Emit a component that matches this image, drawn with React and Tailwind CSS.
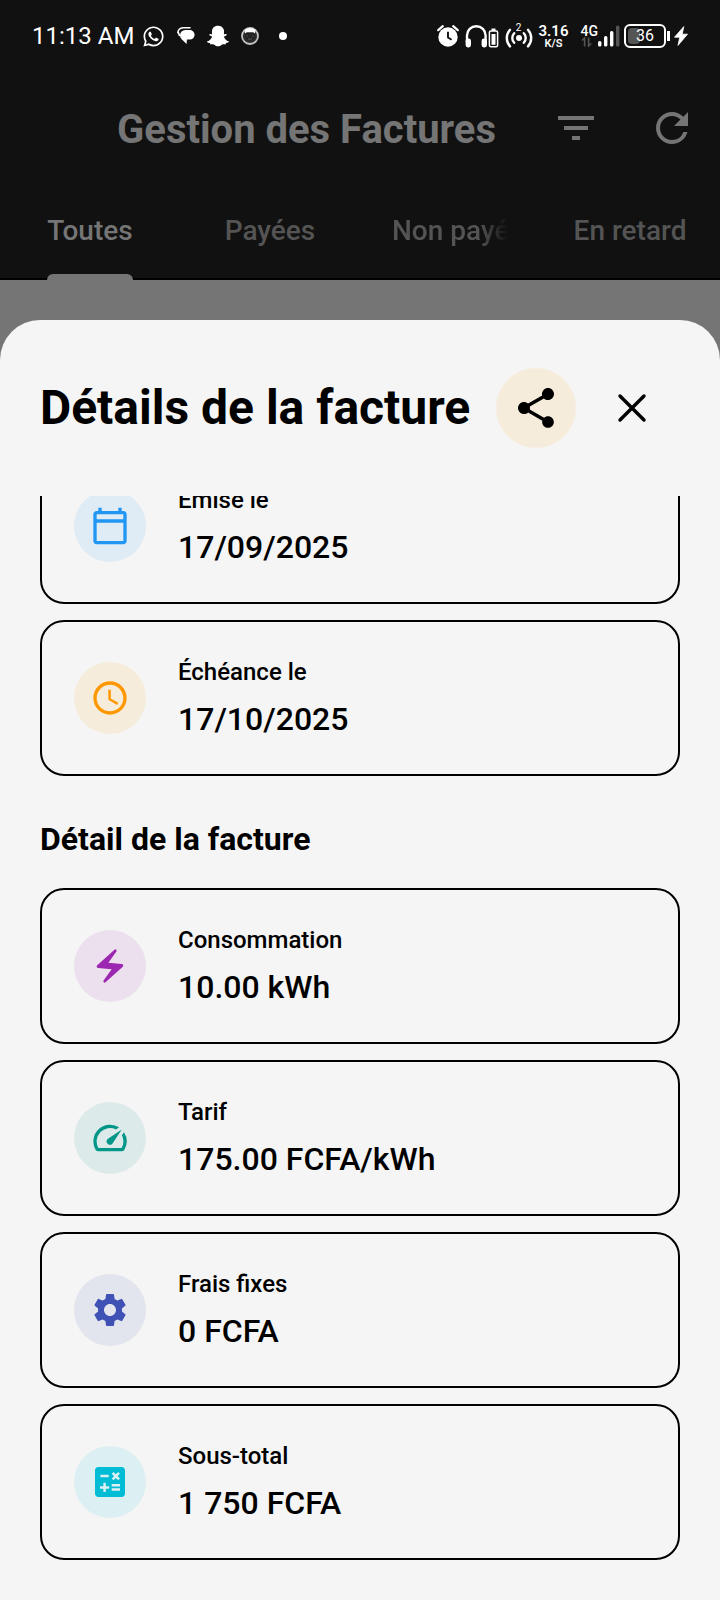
import { useLayoutEffect, useRef } from "react";
import { FaSnapchatGhost, FaWhatsapp } from "react-icons/fa";
import {
  MdAccessTime,
  MdCalculate,
  MdElectricBolt,
  MdFilterList,
  MdRefresh,
  MdSettings,
  MdShare,
  MdSpeed,
} from "react-icons/md";

function CalendarIcon({ className }) {
  return (
    <svg viewBox="0 0 24 24" fill="currentColor" className={className} aria-hidden="true">
      <path d="M20 3h-1V1h-2v2H7V1H5v2H4c-1.1 0-2 .9-2 2v16c0 1.1.9 2 2 2h16c1.1 0 2-.9 2-2V5c0-1.1-.9-2-2-2zm0 18H4V10h16v11zm0-13H4V5h16v3z" />
    </svg>
  );
}

function CloseIcon({ className }) {
  return (
    <svg
      viewBox="0 0 24 24"
      fill="none"
      stroke="currentColor"
      strokeWidth="1.7"
      strokeLinecap="round"
      className={className}
      aria-hidden="true"
    >
      <path d="M6 6l12 12M18 6 6 18" />
    </svg>
  );
}

function ChatIcon() {
  return (
    <svg viewBox="0 0 18 18" className="h-[18px] w-[18px]" aria-hidden="true">
      <path
        d="M8.2 3h4.6a4.8 4.8 0 0 1 0 9.6H9.9L9.6 17 4.4 12A5 5 0 0 1 3 8.2 5.2 5.2 0 0 1 8.200 3z"
        fill="#fff"
      />
      <path d="M.8 6.2C1 3 3 1 6 .8h7.6" fill="none" stroke="#fff" strokeWidth="1.4" />
      <path d="M1 4.6 2.6 9" fill="none" stroke="#fff" strokeWidth="1.6" />
    </svg>
  );
}

function FaceIcon() {
  return (
    <svg viewBox="0 0 18 18" className="h-[18px] w-[18px]" aria-hidden="true">
      <circle cx="9" cy="9" r="8" fill="#2b2b2b" stroke="#c4c4c4" strokeWidth="1.8" />
      <path d="M3.5 3Q9-1 14.5 3L14 6.5l-1.5-1h-7L4 6.5z" fill="#fff" />
      <path d="M4.5 6.5 6 5.5h6l1.5 1 .4 4-2.4 2.7h-5l-2.400-2.700z" fill="#222" />
      <path d="M5.500 9h1.600M10.900 9h1.600M7 12h4" stroke="#555" strokeWidth="1" />
    </svg>
  );
}

function AlarmIcon() {
  return (
    <svg viewBox="0 0 22 22" className="h-[22px] w-[22px]" aria-hidden="true">
      <circle cx="11" cy="12" r="9.7" fill="#fff" />
      <path d="M1.2 5.2l4.600-4M20.800 5.200l-4.600-4" stroke="#fff" strokeWidth="2.2" strokeLinecap="round" />
      <path d="M11 6.800v5.700l3.600 2.200" fill="none" stroke="#111" strokeWidth="1.9" />
    </svg>
  );
}

function HeadphonesIcon() {
  return (
    <svg viewBox="0 0 34 24" className="h-6 w-[34px]" aria-hidden="true">
      <path d="M2 18v-6.5a9.3 9.3 0 0 1 18.6 0V18" fill="none" stroke="#fff" strokeWidth="2.4" />
      <rect x=".6" y="14.5" width="5.4" height="9" rx="2.4" fill="#fff" />
      <rect x="16.6" y="14.5" width="5.4" height="9" rx="2.4" fill="#fff" />
      <rect x="26.5" y="4.5" width="4" height="2.5" fill="#fff" />
      <rect x="24.4" y="7" width="8.2" height="15.8" rx="1.5" fill="none" stroke="#fff" strokeWidth="1.5" />
      <rect x="26.5" y="10" width="4" height="10.8" fill="#fff" />
    </svg>
  );
}

function HotspotIcon() {
  return (
    <span className="relative flex h-6 w-7 items-end">
      <svg viewBox="0 0 28 20" className="h-5 w-7" aria-hidden="true">
        <circle cx="14" cy="10" r="3" fill="#fff" />
        <g fill="none" stroke="#fff" strokeWidth="2.4" strokeLinecap="round">
          <path d="M9.2 5.2a7 7 0 0 0 0 9.6M18.8 5.200a7 7 0 0 1 0 9.600" />
          <path d="M5 1.800a12.400 12.400 0 0 0 0 16.600M23 1.800a12.400 12.400 0 0 1 0 16.600" />
        </g>
      </svg>
      <span className="absolute inset-x-0 top-0 text-center text-[10px] leading-[8px]">2</span>
    </span>
  );
}

function SignalIcon() {
  return (
    <svg viewBox="0 0 22 22" className="h-[22px] w-[22px]" aria-hidden="true">
      <rect x="0" y="16" width="3.4" height="5.5" rx="1.5" fill="#fff" />
      <rect x="6" y="11" width="3.4" height="10.5" rx="1.5" fill="#fff" />
      <rect x="12" y="6" width="3.4" height="15.5" rx="1.5" fill="#fff" />
      <rect x="18" y=".5" width="3.4" height="21" rx="1.5" fill="#555" />
    </svg>
  );
}

function DataArrowsIcon() {
  return (
    <svg viewBox="0 0 12 10" className="h-[10px] w-3" aria-hidden="true">
      <path d="M1 3.500 3.600 1v8.500M7.600.5V9l2.600-2.500" fill="none" stroke="#555" strokeWidth="1.6" />
    </svg>
  );
}

function ChargeIcon() {
  return (
    <svg viewBox="0 0 14 20" className="h-5 w-[14px]" aria-hidden="true">
      <path
        d="M9.800.6.500 11.200h5.200L4 19.400l9.500-11.200H8.200z"
        fill="#fff"
        stroke="#fff"
        strokeWidth=".8"
        strokeLinejoin="round"
      />
    </svg>
  );
}

function StatusBar() {
  return (
    <div className="flex h-[72px] items-center justify-between px-8 text-white">
      <div className="flex items-center gap-2">
        <span className="text-2xl">11:13 AM</span>
        <div className="flex items-center gap-3">
          <FaWhatsapp className="h-[23px] w-[23px]" aria-hidden="true" />
          <ChatIcon />
          <FaSnapchatGhost className="h-[22px] w-[22px]" aria-hidden="true" />
          <FaceIcon />
          <span className="ml-2 h-2 w-2 rounded-full bg-white" />
        </div>
      </div>
      <div className="flex items-center">
        <div className="flex items-center gap-[6px]">
          <AlarmIcon />
          <HeadphonesIcon />
          <HotspotIcon />
          <span className="flex flex-col items-center font-semibold">
            <span className="text-[15px] leading-[14px]">3.16</span>
            <span className="text-[11px] leading-[11px]">K/S</span>
          </span>
        </div>
        <div className="ml-3 flex items-end">
          <span className="flex flex-col font-medium">
            <span className="text-[14px] leading-[12px]">4G</span>
            <DataArrowsIcon />
          </span>
          <SignalIcon />
        </div>
        <div className="ml-1 flex items-center">
          <span className="relative flex h-6 w-[42px] items-center justify-center rounded-md border-2 border-white text-base leading-none">
            <span className="absolute inset-y-[2px] left-[2px] w-3 rounded-sm bg-[#555]" />
            <span className="relative">36</span>
          </span>
          <span className="ml-px h-[10px] w-[3px] bg-white" />
        </div>
        <div className="ml-1">
          <ChargeIcon />
        </div>
      </div>
    </div>
  );
}

const tabs = ["Toutes", "Payées", "Non payées", "En retard"];

function TabBar() {
  return (
    <div role="tablist" className="grid h-24 grid-cols-4 border-b-2 border-black">
      {tabs.map((label, i) => (
        <button
          key={label}
          type="button"
          role="tab"
          aria-selected={i === 0}
          className={
            i === 0
              ? "flex min-w-0 justify-center px-8 text-[28px] font-medium text-[#757575]"
              : "flex min-w-0 justify-center px-8 text-[28px] font-medium text-[#545454]"
          }
        >
          <span className="relative flex h-full min-w-0 items-center">
            <span
              className={
                label === "Non payées"
                  ? "overflow-hidden whitespace-nowrap [mask-image:linear-gradient(to_left,transparent,black_28px)]"
                  : "whitespace-nowrap"
              }
            >
              {label}
            </span>
            {i === 0 && (
              <span className="absolute inset-x-0 -bottom-[2px] h-[6px] rounded-t-md bg-[#757575]" />
            )}
          </span>
        </button>
      ))}
    </div>
  );
}

const dates = [
  { label: "Émise le", value: "17/09/2025", Icon: CalendarIcon, tone: "bg-[#2196f31a] text-[#2196f3]" },
  { label: "Échéance le", value: "17/10/2025", Icon: MdAccessTime, tone: "bg-[#f6ecdb] text-[#ff9800]" },
];

const details = [
  { label: "Consommation", value: "10.00 kWh", Icon: MdElectricBolt, tone: "bg-[#9c27b01a] text-[#9c27b0]" },
  { label: "Tarif", value: "175.00 FCFA/kWh", Icon: MdSpeed, tone: "bg-[#0096881a] text-[#009688]" },
  { label: "Frais fixes", value: "0 FCFA", Icon: MdSettings, tone: "bg-[#3f51b51a] text-[#3f51b5]" },
  { label: "Sous-total", value: "1 750 FCFA", Icon: MdCalculate, tone: "bg-[#00bcd41a] text-[#00bcd4]" },
];

function InfoCard({ label, value, Icon, tone }) {
  return (
    <div className="flex items-center gap-8 rounded-3xl border-2 border-black p-8">
      <div className={`flex h-[72px] w-[72px] shrink-0 items-center justify-center rounded-full ${tone}`}>
        <Icon className="h-10 w-10" aria-hidden="true" />
      </div>
      <dl className="flex min-w-0 flex-col gap-[6px]">
        <dt className="text-2xl leading-9 font-medium">{label}</dt>
        <dd className="text-[32px] leading-[46px] font-medium">{value}</dd>
      </dl>
    </div>
  );
}

function InvoiceSheet() {
  const bodyRef = useRef(null);

  // Opens slightly scrolled, with the first card partly under the header.
  useLayoutEffect(() => {
    bodyRef.current.scrollTop = 48;
  }, []);

  return (
    <section
      role="dialog"
      aria-labelledby="sheet-title"
      className="flex min-h-0 flex-1 flex-col rounded-t-[40px] bg-[#f5f5f5] text-black"
    >
      <header className="flex items-center gap-2 px-10 py-10">
        <h2 id="sheet-title" className="min-w-0 flex-1 text-5xl font-bold whitespace-nowrap">
          Détails de la facture
        </h2>
        <button
          type="button"
          aria-label="Partager"
          className="flex h-20 w-20 shrink-0 items-center justify-center rounded-full bg-[#f6ecdb]"
        >
          <MdShare className="h-12 w-12" aria-hidden="true" />
        </button>
        <button
          type="button"
          aria-label="Fermer"
          className="flex h-24 w-24 shrink-0 items-center justify-center"
        >
          <CloseIcon className="h-12 w-12" />
        </button>
      </header>
      <div ref={bodyRef} className="min-h-0 flex-1 overflow-y-auto px-10 pb-10 [scrollbar-width:none]">
        <div className="flex flex-col gap-4">
          {dates.map((item) => (
            <InfoCard key={item.label} {...item} />
          ))}
        </div>
        <h3 className="mt-10 mb-[26px] text-[32px] leading-[46px] font-bold">Détail de la facture</h3>
        <div className="flex flex-col gap-4">
          {details.map((item) => (
            <InfoCard key={item.label} {...item} />
          ))}
        </div>
      </div>
    </section>
  );
}

export default function App() {
  return (
    <div className="flex h-dvh flex-col bg-[#757575] font-['Roboto',sans-serif]">
      <div className="bg-[#111111]">
        <StatusBar />
        <header className="flex h-28 items-center text-[#757575]">
          <h1 className="min-w-0 flex-1 pt-1 pr-8 text-right text-[40px] font-bold whitespace-nowrap">
            Gestion des Factures
          </h1>
          <button type="button" aria-label="Filtrer" className="flex h-24 w-24 items-center justify-center">
            <MdFilterList className="h-12 w-12" aria-hidden="true" />
          </button>
          <button type="button" aria-label="Actualiser" className="flex h-24 w-24 items-center justify-center">
            <MdRefresh className="h-12 w-12" aria-hidden="true" />
          </button>
        </header>
        <TabBar />
      </div>
      <main className="flex min-h-0 flex-1 flex-col pt-10">
        <InvoiceSheet />
      </main>
    </div>
  );
}
